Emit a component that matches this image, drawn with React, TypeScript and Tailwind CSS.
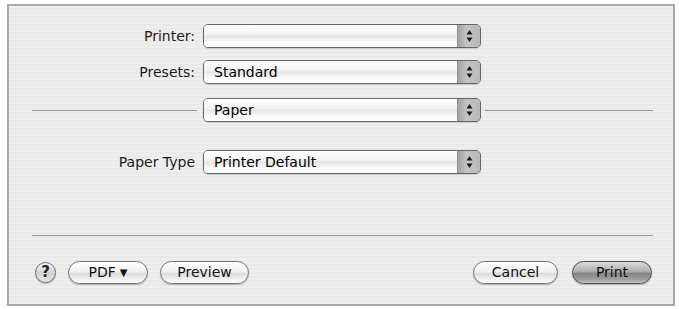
import type { ReactNode } from "react"

function Arrows() {
  return (
    <svg width="7" height="14" viewBox="0 0 7 14" className="block">
      <path d="M3.5 1 L6.5 5.5 L0.5 5.5 Z" fill="#1a1a1a" />
      <path d="M3.5 13 L6.5 8.5 L0.5 8.5 Z" fill="#1a1a1a" />
    </svg>
  )
}

function Popup({ value }: { value?: string }) {
  return (
    <div className="flex h-[24px] w-[278px] overflow-hidden rounded-[5px] border border-[#666] shadow-[0_1px_1px_rgba(0,0,0,0.15)]">
      <div className="flex flex-1 items-center bg-[linear-gradient(180deg,#ffffff_0%,#f4f4f4_40%,#e6e6e6_52%,#fafafa_75%,#ffffff_100%)] pl-[10px] text-[14px] leading-none text-black">
        {value}
      </div>
      <div className="flex w-[23px] items-center justify-center border-l border-[#8f8f8f] bg-[linear-gradient(90deg,#a2a2a2_0%,#c4c4c4_40%,#b8b8b8_100%)]">
        <Arrows />
      </div>
    </div>
  )
}

function Row({ label, children }: { label: string; children: ReactNode }) {
  return (
    <div className="flex h-[24px] items-center">
      <div className="w-[186px] text-right text-[14px] text-[#1c1c1c]">{label}</div>
      <div className="ml-[8px]">{children}</div>
    </div>
  )
}

function Pill({ children, width, dark }: { children: ReactNode; width: string; dark?: boolean }) {
  const skin = dark
    ? "border-[#4f4f4f] bg-[linear-gradient(180deg,#dcdcdc_0%,#acacac_45%,#858585_55%,#a2a2a2_85%,#c4c4c4_100%)]"
    : "border-[#777] bg-[linear-gradient(180deg,#ffffff_0%,#f1f1f1_45%,#dcdcdc_55%,#f3f3f3_85%,#ffffff_100%)]"
  return (
    <div
      className={`flex h-[23px] items-center justify-center rounded-full border text-[14px] text-[#111] shadow-[0_1px_1px_rgba(0,0,0,0.25)] ${skin} ${width}`}
    >
      {children}
    </div>
  )
}

export default function App() {
  return (
    <div className="h-[309px] w-[679px] bg-white pl-[7px] pt-[4px] font-['DejaVu_Sans',sans-serif]">
      <div className="flex h-[302px] w-[668px] flex-col border-2 border-[#a8a8a8] bg-[repeating-linear-gradient(180deg,#eeeeee_0px,#eeeeee_2px,#e9e9e9_2px,#e9e9e9_4px)]">
        <div className="mt-[18px]">
          <Row label="Printer:">
            <Popup />
          </Row>
        </div>
        <div className="mt-[12px]">
          <Row label="Presets:">
            <Popup value="Standard" />
          </Row>
        </div>

        <div className="mt-[14px] flex h-[24px] items-center pl-[23px]">
          <div className="h-[1px] w-[165px] bg-[#999]" />
          <div className="ml-[6px]">
            <Popup value="Paper" />
          </div>
          <div className="ml-[4px] h-[1px] w-[168px] bg-[#999]" />
        </div>

        <div className="mt-[28px]">
          <Row label="Paper Type">
            <Popup value="Printer Default" />
          </Row>
        </div>

        <div className="ml-[23px] mt-[61px] h-[1px] w-[621px] bg-[#999]" />

        <div className="mt-[24px] flex h-[24px] items-center pl-[26px] pr-[21px]">
          <div className="flex h-[21px] w-[21px] items-center justify-center rounded-full border border-[#6f6f6f] bg-[linear-gradient(180deg,#f4f4f4_0%,#d2d2d2_55%,#e6e6e6_100%)] text-[15px] font-bold leading-none text-[#222] shadow-[0_1px_1px_rgba(0,0,0,0.25)]">
            ?
          </div>
          <div className="ml-[12px]">
            <Pill width="w-[80px]">
              PDF <span className="ml-[4px] text-[10px]">▼</span>
            </Pill>
          </div>
          <div className="ml-[12px]">
            <Pill width="w-[89px]">Preview</Pill>
          </div>
          <div className="flex-1" />
          <Pill width="w-[85px]">Cancel</Pill>
          <div className="ml-[14px]">
            <Pill width="w-[80px]" dark>
              Print
            </Pill>
          </div>
        </div>
      </div>
    </div>
  )
}
